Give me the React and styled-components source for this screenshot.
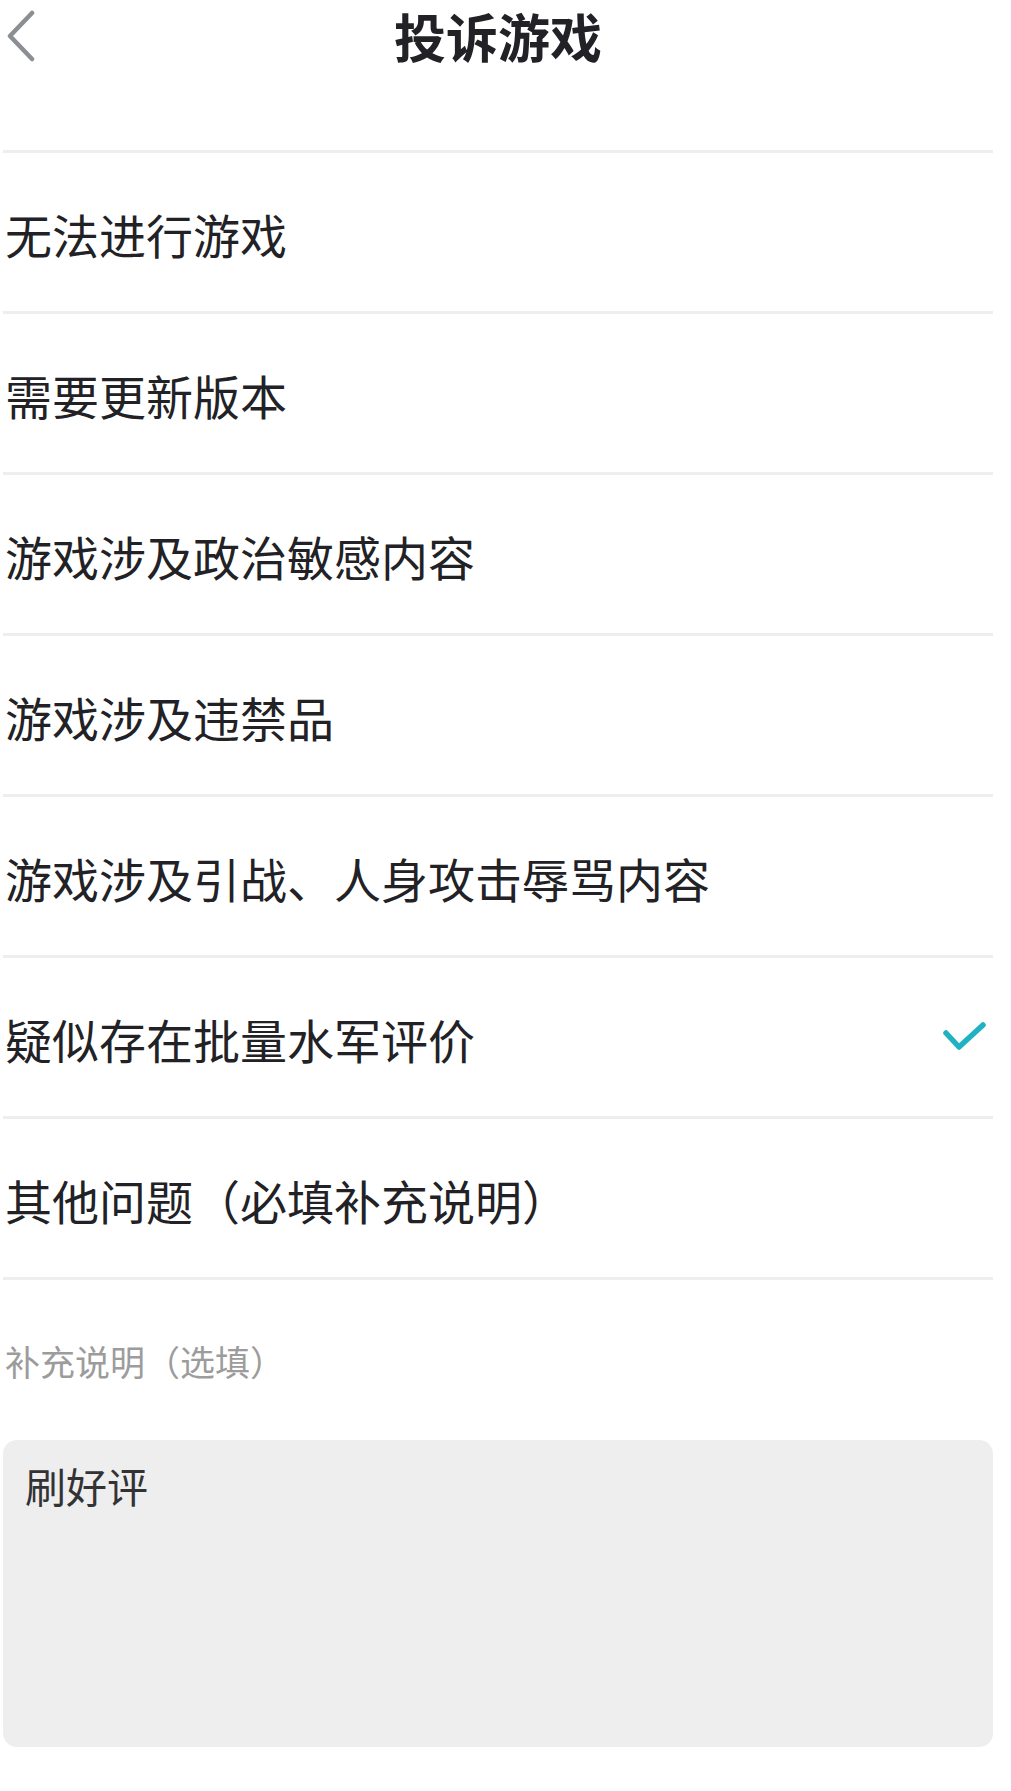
import * as React from "react";
import styled, {createGlobalStyle} from "styled-components";

const GlobalStyle = createGlobalStyle`
    body {
        margin: 0;
        background: #fff;
        font-family: "Noto Sans CJK SC", "Noto Sans", sans-serif;
    }
`;

const Page = styled.div`
    width: 1011px;
    min-height: 1791px;
    padding: 0 18px 0 3px;
    box-sizing: border-box;
    background: #fff;
`;

const Header = styled.header`
    height: 150px;
    display: grid;
    grid-template-columns: 1fr auto 1fr;
    align-items: start;
`;

const BackButton = styled.button`
    width: 40px;
    height: 72px;
    padding: 0;
    border: none;
    background: none;
    display: flex;
    align-items: center;
    justify-self: start;
`;

const Title = styled.h1`
    margin: 0;
    line-height: 72px;
    font-size: 52px;
    font-weight: 700;
    color: #222226;
`;

const List = styled.ul`
    list-style: none;
    margin: 0;
    padding: 0;
    border-top: 3px solid #eeeeee;
`;

const Row = styled.li`
    height: 161px;
    padding: 3px 5px 0 2px;
    box-sizing: border-box;
    border-bottom: 3px solid #eeeeee;
    display: flex;
    align-items: center;
    justify-content: space-between;
    font-size: 47px;
    color: #222226;
`;

const Label = styled.div`
    height: 160px;
    padding-left: 2px;
    display: flex;
    align-items: center;
    font-size: 35px;
    color: #9c9c9c;
`;

const Note = styled.textarea`
    display: block;
    width: 100%;
    height: 307px;
    box-sizing: border-box;
    padding: 17px 22px;
    border: none;
    border-radius: 14px;
    background: #eeeeee;
    resize: none;
    outline: none;
    font-family: "Noto Sans CJK SC", "Noto Sans", sans-serif;
    font-size: 41px;
    line-height: 1.4;
    color: #333336;
`;

const reasons = [
    "无法进行游戏",
    "需要更新版本",
    "游戏涉及政治敏感内容",
    "游戏涉及违禁品",
    "游戏涉及引战、人身攻击辱骂内容",
    "疑似存在批量水军评价",
    "其他问题（必填补充说明）",
];

const Check = () => (
    <svg width="46" height="34" viewBox="0 0 46 34">
        <path d="M4 11 L17 25 L41 3" fill="none" stroke="#1fb3c2" strokeWidth="5.5"
              strokeLinecap="round" strokeLinejoin="round"/>
    </svg>
);

const App = () => {
    const selected = 5;
    return (
        <Page>
            <GlobalStyle/>
            <Header>
                <BackButton aria-label="返回">
                    <svg width="32" height="52" viewBox="0 0 32 52">
                        <path d="M29 3 L7 26 L29 49" fill="none" stroke="#8b8e92" strokeWidth="4.5"
                              strokeLinecap="round" strokeLinejoin="round"/>
                    </svg>
                </BackButton>
                <Title>投诉游戏</Title>
            </Header>
            <List>
                {reasons.map((r, i) => (
                    <Row key={r}>
                        <span>{r}</span>
                        {i === selected && <Check/>}
                    </Row>
                ))}
            </List>
            <Label>补充说明（选填）</Label>
            <Note readOnly defaultValue="刷好评"/>
        </Page>
    );
};

export default App;
